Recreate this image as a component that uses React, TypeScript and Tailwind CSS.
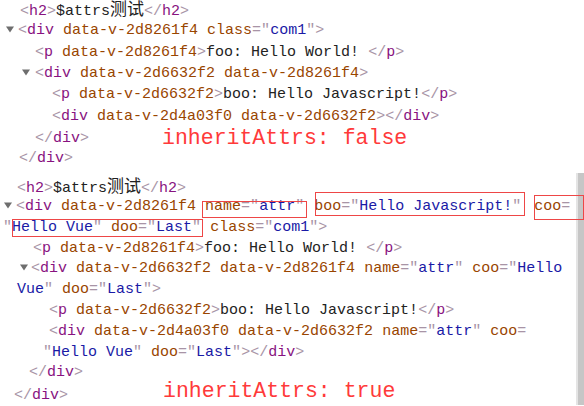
import React from 'react';

// devtools palette
const Br = ({ children }: { children: React.ReactNode }) => <span className="text-[#a894a6]">{children}</span>;
const Tg = ({ children }: { children: React.ReactNode }) => <span className="text-[#881280]">{children}</span>;
const An = ({ children }: { children: React.ReactNode }) => <span className="text-[#994500]">{children}</span>;
const Av = ({ children }: { children: React.ReactNode }) => <span className="text-[#1a1aa6]">{children}</span>;
const Tx = ({ children }: { children: React.ReactNode }) => <span className="text-[#222222]">{children}</span>;

function Attr({ name, value }: { name: string; value: string }) {
  return (
    <>
      {' '}
      <An>{name}</An>
      <Br>="</Br>
      <Av>{value}</Av>
      <Br>"</Br>
    </>
  );
}

function Flag({ name }: { name: string }) {
  return (
    <>
      {' '}
      <An>{name}</An>
    </>
  );
}

function Open({ tag, children }: { tag: string; children?: React.ReactNode }) {
  return (
    <>
      <Br>&lt;</Br>
      <Tg>{tag}</Tg>
      {children}
      <Br>&gt;</Br>
    </>
  );
}

function Close({ tag }: { tag: string }) {
  return (
    <>
      <Br>&lt;/</Br>
      <Tg>{tag}</Tg>
      <Br>&gt;</Br>
    </>
  );
}

function Caret({ className }: { className: string }) {
  return (
    <svg width="8" height="7" viewBox="0 0 8 7" className={`inline-block align-[1px] ${className}`}>
      <path d="M0 0.5 L8 0.5 L4 6.5 Z" fill="#6e6e6e" />
    </svg>
  );
}

function Row({ className, children }: { className: string; children: React.ReactNode }) {
  return <div className={`whitespace-pre ${className}`}>{children}</div>;
}

// line heights of the two captures differ slightly
const A = 'h-[21.33px] leading-[21.33px]';
const B = 'h-[20.8px] leading-[20.8px]';

function Title() {
  return (
    <>
      <Open tag="h2" />
      <Tx>
        $attrs
        <span className="font-['Noto_Sans_CJK_SC',sans-serif] text-[17px] leading-none">测试</span>
      </Tx>
      <Close tag="h2" />
    </>
  );
}

function Note({ className, children }: { className: string; children: React.ReactNode }) {
  return (
    <span className={`relative inline-block align-middle text-[21.5px] leading-none text-[#ff3a3a] ${className}`}>
      {children}
    </span>
  );
}

export default function App() {
  return (
    <div className="h-screen w-full overflow-hidden bg-white font-['Liberation_Mono','Noto_Sans_CJK_SC',monospace] text-[15px]">
      {/* inheritAttrs: false */}
      <div className="-mt-[1px]">
        <Row className={`${A} pl-[20px]`}>
          <Title />
        </Row>
        <Row className={`${A} pl-[6px]`}>
          <Caret className="mr-[4px]" />
          <Open tag="div">
            <Flag name="data-v-2d8261f4" />
            <Attr name="class" value="com1" />
          </Open>
        </Row>
        <Row className={`${A} pl-[35px]`}>
          <Open tag="p">
            <Flag name="data-v-2d8261f4" />
          </Open>
          <Tx>foo: Hello World! </Tx>
          <Close tag="p" />
        </Row>
        <Row className={`${A} pl-[22px]`}>
          <Caret className="mr-[5px]" />
          <Open tag="div">
            <Flag name="data-v-2d6632f2" />
            <Flag name="data-v-2d8261f4" />
          </Open>
        </Row>
        <Row className={`${A} pl-[52px]`}>
          <Open tag="p">
            <Flag name="data-v-2d6632f2" />
          </Open>
          <Tx>boo: Hello Javascript!</Tx>
          <Close tag="p" />
        </Row>
        <Row className={`${A} pl-[52px]`}>
          <Open tag="div">
            <Flag name="data-v-2d4a03f0" />
            <Flag name="data-v-2d6632f2" />
          </Open>
          <Close tag="div" />
        </Row>
        <Row className={`${A} pl-[35px]`}>
          <Close tag="div" />
          <Note className="ml-[73px] top-[1px]">inheritAttrs: false</Note>
        </Row>
        <Row className={`${A} pl-[19px]`}>
          <Close tag="div" />
        </Row>
      </div>

      {/* inheritAttrs: true */}
      <div className="relative mt-[3.5px] flex">
        <div className="flex-1 pt-[3px]">
          <Row className={`${B} pl-[17px]`}>
            <Title />
          </Row>
          <Row className={`${B} pl-[4px]`}>
            <Caret className="mr-[4px]" />
            <Br>&lt;</Br>
            <Tg>div</Tg>
            <Flag name="data-v-2d8261f4" />
            <Attr name="name" value="attr" />
            <span className="ml-[1px]" />
            <Attr name="boo" value="Hello Javascript!" />
            <span className="ml-[4px]" />{' '}
            <An>coo</An>
            <Br>=</Br>
          </Row>
          <Row className={`${B} pl-[3px]`}>
            <Br>"</Br>
            <Av>Hello Vue</Av>
            <Br>"</Br>
            <Attr name="doo" value="Last" />
            <Attr name="class" value="com1" />
            <Br>&gt;</Br>
          </Row>
          <Row className={`${B} pl-[33px]`}>
            <Open tag="p">
              <Flag name="data-v-2d8261f4" />
            </Open>
            <Tx>foo: Hello World! </Tx>
            <Close tag="p" />
          </Row>
          <Row className={`${B} pl-[20px]`}>
            <Caret className="mr-[3px]" />
            <Br>&lt;</Br>
            <Tg>div</Tg>
            <Flag name="data-v-2d6632f2" />
            <Flag name="data-v-2d8261f4" />
            <Attr name="name" value="attr" />{' '}
            <An>coo</An>
            <Br>="</Br>
            <Av>Hello</Av>
          </Row>
          <Row className={`${B} pl-[17px]`}>
            <Av>Vue</Av>
            <Br>"</Br>
            <Attr name="doo" value="Last" />
            <Br>&gt;</Br>
          </Row>
          <Row className={`${B} pl-[49px]`}>
            <Open tag="p">
              <Flag name="data-v-2d6632f2" />
            </Open>
            <Tx>boo: Hello Javascript!</Tx>
            <Close tag="p" />
          </Row>
          <Row className={`${B} pl-[49px]`}>
            <Br>&lt;</Br>
            <Tg>div</Tg>
            <Flag name="data-v-2d4a03f0" />
            <Flag name="data-v-2d6632f2" />
            <Attr name="name" value="attr" />{' '}
            <An>coo</An>
            <Br>=</Br>
          </Row>
          <Row className={`${B} pl-[43px]`}>
            <Br>"</Br>
            <Av>Hello Vue</Av>
            <Br>"</Br>
            <Attr name="doo" value="Last" />
            <Br>&gt;</Br>
            <Close tag="div" />
          </Row>
          <Row className={`${B} pl-[29px]`}>
            <Close tag="div" />
          </Row>
          <Row className={`${B} pl-[14px]`}>
            <Close tag="div" />
            <Note className="ml-[95px] -top-[3px]">inheritAttrs: true</Note>
          </Row>
        </div>
        <div className="w-[8px] shrink-0 border-l-2 border-[#e4e4e4] bg-[#c6c6c6]" />

        {/* red annotation boxes */}
        <div className="absolute left-[202px] top-[28px] h-[17px] w-[105px] border-[1.5px] border-[#ee4646]" />
        <div className="absolute left-[315px] top-[19px] h-[24px] w-[210px] border-[1.5px] border-[#ee4646]" />
        <div className="absolute left-[534px] top-[22px] h-[25px] w-[50px] border-[1.5px] border-[#ee4646]" />
        <div className="absolute left-[12px] top-[46px] h-[18px] w-[191px] border-[1.5px] border-[#ee4646]" />
      </div>
    </div>
  );
}
